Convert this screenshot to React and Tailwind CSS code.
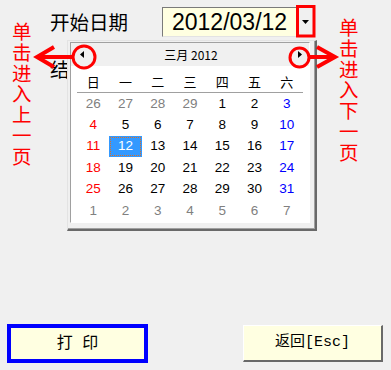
const CJK = { fontFamily: '"Noto Sans CJK SC", sans-serif' };

const rows = [
  [26, 27, 28, 29, 1, 2, 3],
  [4, 5, 6, 7, 8, 9, 10],
  [11, 12, 13, 14, 15, 16, 17],
  [18, 19, 20, 21, 22, 23, 24],
  [25, 26, 27, 28, 29, 30, 31],
  [1, 2, 3, 4, 5, 6, 7],
];

const weekdays = ['日', '一', '二', '三', '四', '五', '六'];

function dayColor(r, c, d) {
  const other = (r === 0 && d > 20) || (r === 5);
  if (other) return 'text-[#808080]';
  if (c === 0) return 'text-[#ff0000]';
  if (c === 6) return 'text-[#0000ff]';
  return 'text-black';
}

function Calendar() {
  return (
    <div className="absolute left-[67px] top-[40px] h-[191px] w-[250px] border-t border-l border-t-[#e3e3e3] border-l-[#e3e3e3] border-r-2 border-b-2 border-r-[#696969] border-b-[#696969] bg-[#f0f0f0]">
      <div className="flex h-full flex-col border-r border-b border-r-[#a0a0a0] border-b-[#a0a0a0] pt-[1px] pl-[2px] pr-[4px] pb-[5px]">
        <div className="flex flex-1 flex-col border-t border-l border-t-[#a0a0a0] border-l-[#a0a0a0] border-r border-b border-r-white border-b-white">
          <div className="grid h-[23px] grid-cols-[auto_1fr_auto] items-center bg-[#f0f0f0] pl-[9px] pr-[7px]">
            <svg width="4" height="7" viewBox="0 0 4 7">
              <polygon points="4,0 4,7 0,3.5" fill="#000" />
            </svg>
            <div className="text-center text-[12px] text-black" style={CJK}>
              三月 2012
            </div>
            <svg width="4" height="7" viewBox="0 0 4 7">
              <polygon points="0,0 0,7 4,3.5" fill="#000" />
            </svg>
          </div>
          <div className="flex-1 bg-white pl-[6px] pt-[5px]">
            <div className="grid h-[22px] w-[226px] grid-cols-7 items-center border-b border-b-[#a0a0a0]">
              {weekdays.map((w) => (
                <div key={w} className="text-center text-[13px] leading-[16px] text-black" style={CJK}>
                  {w}
                </div>
              ))}
            </div>
            <div className="grid w-[226px] grid-cols-7">
              {rows.map((row, r) =>
                row.map((d, c) => {
                  const sel = r === 2 && c === 1;
                  return (
                    <div
                      key={`${r}-${c}`}
                      className={`flex h-[21.4px] items-center justify-center text-[13.5px] leading-[16px] font-['Liberation_Sans',sans-serif] ${
                        sel ? 'bg-[#3399ff] text-white outline-1 outline-dotted outline-[#e07020] -outline-offset-2' : dayColor(r, c, d)
                      }`}
                    >
                      {d}
                    </div>
                  );
                })
              )}
            </div>
          </div>
        </div>
      </div>
    </div>
  );
}

function Annotations() {
  return (
    <svg className="pointer-events-none absolute inset-0" width="391" height="370" viewBox="0 0 391 370">
      <g fill="none" stroke="#ff0000" strokeWidth="3">
        <rect x="297.5" y="6.5" width="16.5" height="29.5" />
        <circle cx="84" cy="57" r="11" />
        <circle cx="299.5" cy="57.5" r="9.5" />
      </g>
      <g fill="none" stroke="#ff0000" strokeWidth="4" strokeLinecap="butt" strokeLinejoin="miter">
        <line x1="72" y1="57" x2="38" y2="57" />
        <polyline points="54,47 37,57 54,67" />
        <line x1="310" y1="57" x2="335" y2="57" />
        <polyline points="317,47 335,57 317,67" />
      </g>
    </svg>
  );
}

function RedColumn({ text, className }) {
  return (
    <div className={`absolute flex flex-col text-[19.5px] leading-[20.8px] text-[#ff0000] ${className}`} style={CJK}>
      {text.split('').map((ch, i) => (
        <span key={i}>{ch}</span>
      ))}
    </div>
  );
}

export default function App() {
  return (
    <div className="relative flex h-[370px] w-[391px] flex-col overflow-hidden bg-[#f0f0f0]">
      <div className="pl-[50px] pt-[7px]">
        <div className="flex items-center">
          <div className="w-[112px] text-[19.5px] leading-[20px] text-black" style={CJK}>
            开始日期
          </div>
          <div className="flex h-[30px] w-[153px] border border-t-[#7a7a7a] border-l-[#7a7a7a] border-r-[#e3e3e3] border-b-[#e3e3e3]">
            <div className="flex flex-1 items-center bg-[#ffffe1] pl-[9px] text-[23px] leading-none text-black font-['Liberation_Sans',sans-serif]">
              2012/03/12
            </div>
            <div className="flex w-[18px] items-center justify-center bg-[#f0f0f0]">
              <svg width="7" height="4" viewBox="0 0 7 4">
                <polygon points="0,0 7,0 3.5,4" fill="#000" />
              </svg>
            </div>
          </div>
        </div>
        <div className="mt-[22px] text-[19.5px] leading-[20px] text-black" style={CJK}>
          结束日期
        </div>
      </div>

      <div className="mt-auto flex items-end justify-between pb-[7px] pl-[7px] pr-[8px]">
        <button className="flex h-[39px] w-[141px] items-center justify-center border-4 border-[#0000ff] bg-[#ffffe1] text-[16px] text-black font-['Liberation_Mono','Noto_Sans_CJK_SC',monospace]">
          打 印
        </button>
        <button className="mb-[1px] flex h-[37px] w-[140px] items-center justify-center border border-t-white border-l-white border-r-2 border-b-2 border-r-[#696969] border-b-[#696969] bg-[#ffffe1] text-[15px] text-black font-['Liberation_Mono','Noto_Sans_CJK_SC',monospace]">
          返回[Esc]
        </button>
      </div>

      <Calendar />
      <Annotations />
      <RedColumn text="单击进入上一页" className="left-[12px] top-[21px]" />
      <RedColumn text="单击进入下一页" className="left-[339px] top-[17px]" />
    </div>
  );
}
